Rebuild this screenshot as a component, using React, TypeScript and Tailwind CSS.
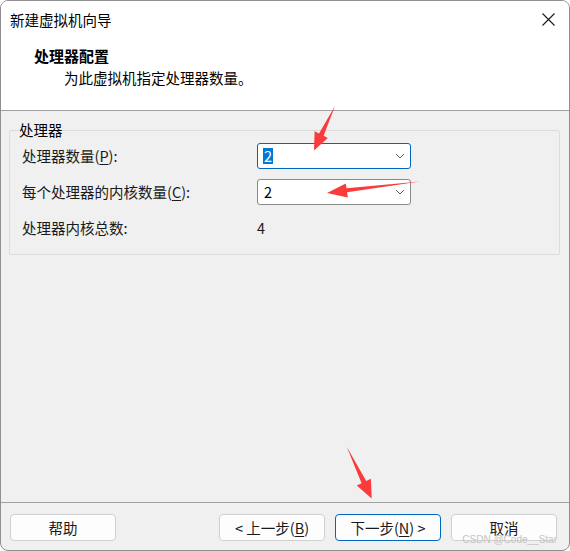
import type { ReactNode } from "react";

const FONT = { fontFamily: '"Noto Sans CJK SC", "Noto Sans", sans-serif' };

function Chevron() {
  return (
    <svg width="10" height="6" viewBox="0 0 10 6" className="shrink-0">
      <path d="M1 1 L5 5 L9 1" fill="none" stroke="#5f5f5f" strokeWidth="1" />
    </svg>
  );
}

function Combo({ value, focused }: { value: string; focused?: boolean }) {
  return (
    <div
      className={`flex h-[26px] w-[154px] items-center justify-between rounded-[3px] bg-white pl-[5px] pr-[5px] ${
        focused ? "border border-[#0067c0]" : "border border-[#8a8a8a]"
      }`}
    >
      {focused ? (
        <span className="bg-[#0078d7] px-[1px] leading-[16px] text-white">{value}</span>
      ) : (
        <span className="px-[1px] leading-[16px] text-black">{value}</span>
      )}
      <Chevron />
    </div>
  );
}

function Key({ children }: { children: ReactNode }) {
  return <span className="underline underline-offset-2">{children}</span>;
}

function Btn({ children, primary }: { children: ReactNode; primary?: boolean }) {
  return (
    <button
      type="button"
      className={`flex h-[27px] w-[106px] items-center justify-center rounded-[4px] bg-[#fdfdfd] text-[14.5px] leading-[16px] text-[#1a1a1a] ${
        primary ? "border border-[#0067c0]" : "border border-[#d0d0d0]"
      }`}
    >
      {children}
    </button>
  );
}

function Arrows() {
  return (
    <svg className="pointer-events-none absolute left-0 top-0" width="570" height="551" viewBox="0 0 570 551">
      <polygon
        points="335,106 323.6,135.8 327.8,138 314,150.5 314.6,131.3 319,133.6"
        fill="#fb3b3b"
      />
      <polygon
        points="420,181.5 347.1,192.2 347.8,197.4 327,193 345.8,183.6 346.5,188.2"
        fill="#fb3b3b"
      />
      <polygon
        points="346.7,446.7 366.2,481 370.9,478.8 371.7,498.5 356.8,485.6 361.6,483.2"
        fill="#fb3b3b"
      />
    </svg>
  );
}

export default function App() {
  return (
    <div className="relative h-[551px] w-[570px] bg-white" style={FONT}>
      <div className="flex h-full w-full flex-col overflow-hidden rounded-[8px] border border-[#8f8f8f] bg-[#f0f0f0] text-[14.5px] text-[#1a1a1a]">
        {/* header */}
        <div className="h-[110px] shrink-0 border-b border-[#a0a0a0] bg-white">
          <div className="flex h-[37px] items-center justify-between pl-[9px] pr-[14px]">
            <span className="text-[14.5px] leading-[20px] text-black">新建虚拟机向导</span>
            <svg width="13" height="13" viewBox="0 0 13 13">
              <path d="M0.5 0.5 L12.5 12.5 M12.5 0.5 L0.5 12.5" stroke="#1a1a1a" strokeWidth="1.1" />
            </svg>
          </div>
          <div className="mt-[8px] pl-[33px] text-[15px] font-bold leading-[20px] text-black">处理器配置</div>
          <div className="mt-[2px] pl-[63px] leading-[20px] text-black">为此虚拟机指定处理器数量。</div>
        </div>

        {/* body */}
        <div className="flex-1 pl-[8px] pr-[9px] pt-[11px]">
          <fieldset className="h-[133px] rounded-[2px] border border-[#dcdcdc] px-[9px]">
            <legend className="leading-[16px] text-black">处理器</legend>
            <div className="mt-[5px] grid grid-cols-[235px_154px] items-center gap-y-[10px] pl-[3px]">
              <span className="leading-[26px]">
                处理器数量(<Key>P</Key>):
              </span>
              <Combo value="2" focused />
              <span className="leading-[26px]">
                每个处理器的内核数量(<Key>C</Key>):
              </span>
              <Combo value="2" />
              <span className="leading-[26px]">处理器内核总数:</span>
              <span className="leading-[26px]">4</span>
            </div>
          </fieldset>
        </div>

        {/* footer */}
        <div className="flex h-[48px] shrink-0 items-start justify-between border-t border-[#a0a0a0] pl-[9px] pr-[12px] pt-[11px]">
          <Btn>帮助</Btn>
          <div className="flex gap-[10px]">
            <Btn>
              &lt; 上一步(<Key>B</Key>)
            </Btn>
            <Btn primary>
              下一步(<Key>N</Key>) &gt;
            </Btn>
            <Btn>取消</Btn>
          </div>
        </div>
      </div>

      <Arrows />
      <span
        className="pointer-events-none absolute bottom-[7px] right-[13px] text-[10px] leading-[9px] text-[#c4c4c4]"
        style={{ fontFamily: '"Liberation Sans", sans-serif' }}
      >
        CSDN @Code__Star
      </span>
    </div>
  );
}
